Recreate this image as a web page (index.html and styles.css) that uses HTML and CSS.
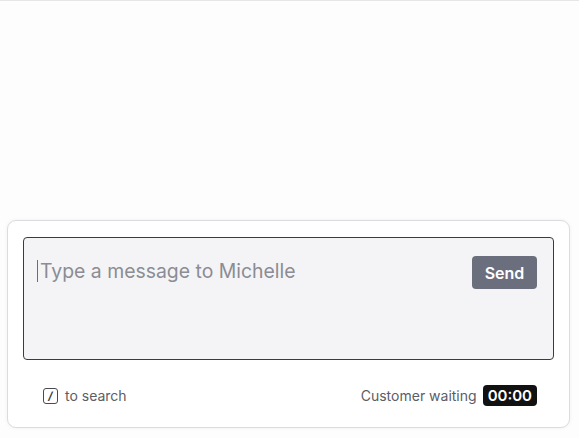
FILE: index.html
```html
<!DOCTYPE html>
<html>
<head>
  <title>Conversation</title>
  <link rel="stylesheet" href="styles.css">
</head>
<body>
  <div class="page">
    <div class="history"></div>

    <div class="composer">
      <div class="input-box">
        <div class="input-text">
          <span class="caret"></span>
          <span class="placeholder">Type a message to Michelle</span>
        </div>
        <button class="send-btn">Send</button>
      </div>

      <div class="composer-footer">
        <div class="hint">
          <span class="kbd">/</span>
          <span>to search</span>
        </div>
        <div class="waiting">
          <span>Customer waiting</span>
          <span class="timer">00:00</span>
        </div>
      </div>
    </div>
  </div>
</body>
</html>
```

FILE: styles.css
```css
html, body {
  height: 100%;
}
body {
  margin: 0;
  font-family: Inter, "Noto Sans", Arial, sans-serif;
  background-color: #fdfdfd;
  color: #55565e;
}
.page {
  height: 100%;
  box-sizing: border-box;
  border-top: 1px solid #e6e6e8;
  display: flex;
  flex-direction: column;
  padding: 0 9px 10px 7px;
}
.history {
  flex: 1;
}
.composer {
  background-color: #fff;
  border: 1px solid #dcdce0;
  border-radius: 9px;
  box-shadow: 0 0 4px rgba(0,0,0,0.05);
  padding: 16px 15px 0 15px;
}
.input-box {
  height: 123px;
  box-sizing: border-box;
  border: 1px solid #3a3b40;
  border-radius: 4px;
  background-color: #f4f4f6;
  display: flex;
  align-items: flex-start;
  justify-content: space-between;
  padding: 18px 16px 0 13px;
}
.input-text {
  display: flex;
  align-items: center;
  margin-top: 3px;
}
.caret {
  width: 1px;
  height: 22px;
  background-color: #6d6e75;
  margin-right: 2px;
}
.placeholder {
  font-size: 19.4px;
  color: #8b8c94;
}
.send-btn {
  background-color: #6b6e7d;
  color: #fff;
  border: none;
  border-radius: 4px;
  font-family: inherit;
  font-size: 16px;
  font-weight: 600;
  width: 65px;
  height: 33px;
  padding: 0;
}
.composer-footer {
  height: 67px;
  box-sizing: border-box;
  display: flex;
  align-items: center;
  justify-content: space-between;
  padding: 3px 17px 0 20px;
}
.hint {
  display: flex;
  align-items: center;
  gap: 7px;
  font-size: 14px;
  color: #5c5d65;
}
.kbd {
  width: 13px;
  height: 14px;
  border: 1.5px solid #4a4b52;
  border-radius: 3px;
  font-size: 11px;
  font-weight: 700;
  font-style: italic;
  color: #3a3b40;
  display: flex;
  align-items: center;
  justify-content: center;
  margin-top: 1px;
}
.waiting {
  display: flex;
  align-items: center;
  gap: 6px;
  font-size: 14px;
  color: #5c5d65;
}
.timer {
  background-color: #111;
  color: #fff;
  border-radius: 4px;
  font-size: 15px;
  font-weight: 600;
  padding: 1px 5px;
  line-height: 19px;
}
```
